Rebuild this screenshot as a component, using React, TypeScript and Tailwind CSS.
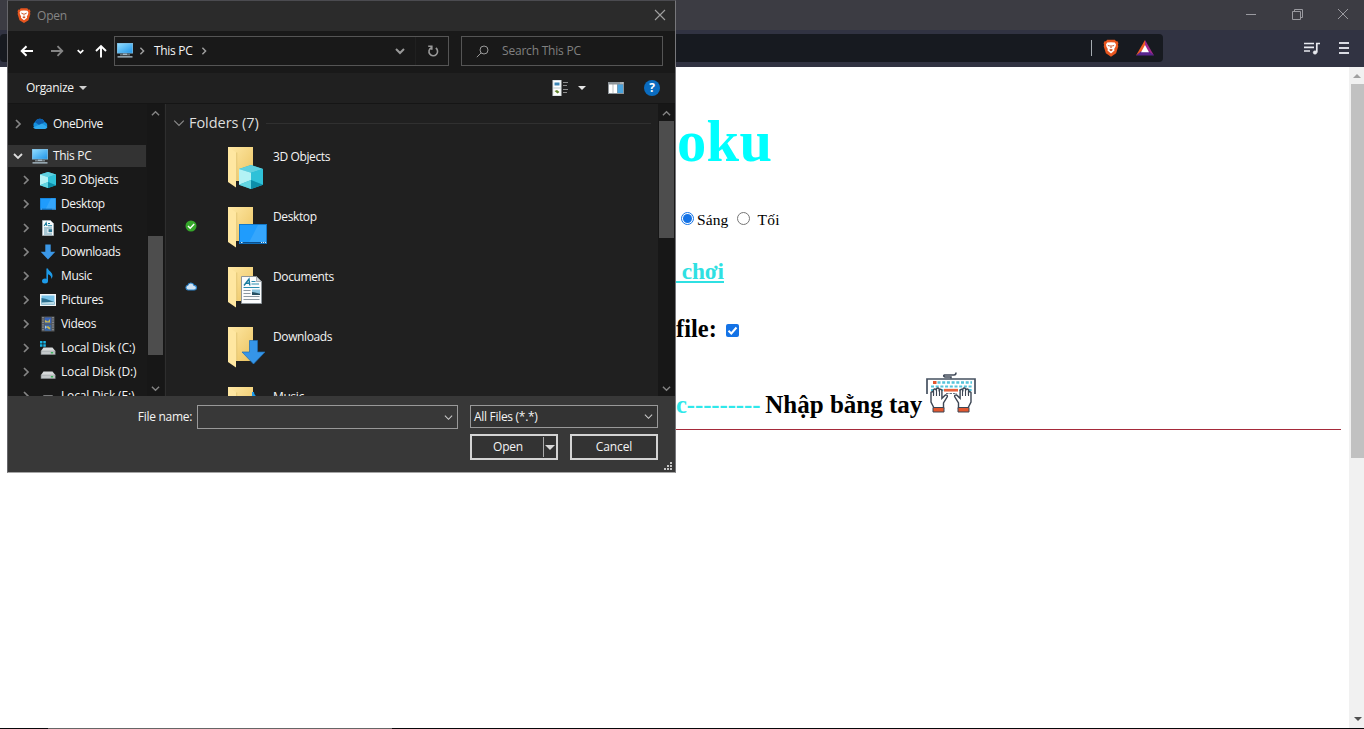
import type { ReactNode } from "react";

const UI = "font-['Open_Sans','Noto_Sans',sans-serif]";

function Brave({ className }: { className: string }) {
  return (
    <svg viewBox="0 0 16 18" className={className}>
      <path d="M4.2 0.8h7.6l1.3 1.5 1.4-.1.9 2-.5 1.6.4 1.4-2.2 7.1L8 17.7l-5.1-3.4L.7 7.2l.4-1.4L.6 4.2l.9-2 1.4.1z" fill="#e8561f" />
      <path d="M4.2 3.6l3.8-.4 3.800.4 1.200 2-.5 2.200-1.300 2.300.3 1.500L8 14.400l-3.500-2.800.3-1.500-1.300-2.300-.5-2.200z" fill="#fff" />
      <path d="M4.300 5.700l2.600.7-.7 1.400zM11.700 5.700l-2.600.7.700 1.400zM6 10.800l2-.9 2 .9-2 1.500zM7.600 6h.8l.3 2.500-.7.800-.7-.8z" fill="#c84a1c" />
    </svg>
  );
}

function Chevron({ dir, className, w = 1.5 }: { dir: "r" | "d" | "u"; className: string; w?: number }) {
  const d = dir === "r" ? "M3 1l4 4-4 4" : dir === "d" ? "M1 3l4 4 4-4" : "M1 7l4-4 4 4";
  return (
    <svg viewBox="0 0 10 10" className={className} fill="none" stroke="currentColor" strokeWidth={w}>
      <path d={d} />
    </svg>
  );
}

function Monitor() {
  return (
    <svg viewBox="0 0 16 16" className="h-4 w-4 shrink-0">
      <defs>
        <linearGradient id="mon" x1="0" y1="0" x2="1" y2="1">
          <stop offset="0" stopColor="#8fdcff" />
          <stop offset="1" stopColor="#2196e8" />
        </linearGradient>
      </defs>
      <rect x="0" y="1" width="16" height="10.5" fill="#7fb9dc" />
      <rect x="0.7" y="1.7" width="14.6" height="9.1" fill="url(#mon)" />
      <path d="M6 11.5h4v1.5H6z" fill="#8ea4b2" />
      <path d="M3 12.4h10v.9H3zM0.5 14.3h15v1.3h-15z" fill="#b7cbd8" />
    </svg>
  );
}

function Cube() {
  return (
    <g>
      <path d="M8 0l8 2.600v10.600L8 16 0 13.200V2.600z" fill="#26b6d1" />
      <path d="M8 0l8 2.600L8 5.200 0 2.600z" fill="#5fd0df" />
      <path d="M0 2.600l8 2.600V10l-8 3.200z" fill="#b3f2f5" />
      <path d="M8 5.200l8-2.600v10.600L8 10z" fill="#2fc1d8" />
      <path d="M0 13.200L8 10v6z" fill="#62d6e2" />
      <path d="M8 10l8 3.200L8 16z" fill="#0c8ea9" />
    </g>
  );
}

function Screen() {
  return (
    <g>
      <rect x="0" y="0" width="28" height="20" fill="#1378c8" />
      <rect x="1" y="1" width="26" height="17.500" fill="#1f9cfd" />
      <path d="M10 18.500L19 1h8v17.500z" fill="#35a6fc" />
      <path d="M1 18.600h26" stroke="#0b4f8c" strokeWidth="1.200" />
      <path d="M2 18.500h1.500M22 18.500h1.200M24 18.500h1.200M26 18.500h1" stroke="#d7efff" strokeWidth="1" />
    </g>
  );
}

function Paper() {
  return (
    <g>
      <path d="M.5.5h15l5 5v22H.5z" fill="#fbfcfd" stroke="#8c9499" />
      <path d="M15.500.5v5h5z" fill="#d3d9dd" stroke="#8c9499" strokeWidth=".7" />
      <path d="M3 9.500L8 3l.8 6.500M4.800 7.300h4" stroke="#1b7d9f" strokeWidth="1.400" fill="none" />
      <path d="M10.500 5.500h4M10.500 8h7.500M2.500 11.500h16" stroke="#2b8db0" strokeWidth="1.200" />
      <path d="M2.500 14.500h7M2.500 17.500h7M2.500 20.500h16M2.500 23.500h16" stroke="#8b97a0" />
      <rect x="11" y="13.500" width="8" height="5.500" fill="#8dc4de" />
      <path d="M11 16l3 .5 5 1.200v1.300h-8z" fill="#264f62" />
    </g>
  );
}

function Arrow() {
  return <path d="M7.500.5h8v11.500h7.500L11.500 24 0 12h7.500z" fill="#3595e8" stroke="#1c6db4" strokeWidth=".7" />;
}

function Drive() {
  return (
    <g>
      <path d="M3.500 7.500h9l3 3.700H.8z" fill="#d7dadb" />
      <rect x=".8" y="10.800" width="14.700" height="4" fill="#919698" />
      <rect x="1.500" y="11.300" width="13.300" height="2.800" fill="#c4c8ca" />
      <rect x="10.800" y="12.200" width="2.400" height="1.200" fill="#1fae45" />
    </g>
  );
}

const sideIcons: Record<string, ReactNode> = {
  cube: <Cube />,
  screen: (
    <g transform="translate(0 2) scale(.571 .6)">
      <Screen />
    </g>
  ),
  doc: (
    <g>
      <path d="M2.500.5h8l3 3v12h-11z" fill="#f7fafb" stroke="#a9b4ba" strokeWidth=".8" />
      <path d="M4.200 6l2-3.300.7 3.300M8 3.500h2M8 5.700h4" stroke="#167b9d" strokeWidth="1.100" fill="none" />
      <path d="M4 8h8M4 10h3.500M4 12h3.500M4 14h8" stroke="#4a8ca5" strokeWidth=".9" />
      <rect x="8.500" y="9.200" width="3.600" height="3" fill="#2b7693" />
    </g>
  ),
  down: <path d="M5.300.5h5.400v7.300h4.600L8 15.500.7 7.800h4.600z" fill="#3b97e6" />,
  music: (
    <g fill="#1d9be9">
      <ellipse cx="5" cy="13" rx="3" ry="2.500" />
      <path d="M6.400.5H8c.3 2.500 5 3.900 4.500 7.800-.1 1.200-.7 2-1.300 2.600.4-2.700-.8-3.900-3.200-4.700V13H6.400z" />
    </g>
  ),
  pic: (
    <g>
      <rect x="0" y="2" width="16" height="12" fill="#f2f5f6" />
      <rect x="1.500" y="3.500" width="13" height="9" fill="#79c3e9" />
      <path d="M1.500 6l4 .7 9 3.300v2.500h-13z" fill="#2b6f8f" />
      <path d="M1.500 10.500l13-.8v2.800h-13z" fill="#b6d9e5" />
    </g>
  ),
  video: (
    <g>
      <rect x="1.500" y=".5" width="13" height="15" fill="#55585b" />
      <path d="M3 1v14M13 1v14" stroke="#a5a8aa" strokeWidth="1.100" strokeDasharray="1.200 1.200" />
      <rect x="4.700" y="1.500" width="6.600" height="6" fill="#3b64b5" />
      <rect x="4.700" y="8.700" width="6.600" height="6" fill="#3968a8" />
      <path d="M5 4l3 1.500L10 3v3.500H5zM6 11l2-1 2.500 2-1 1.500z" fill="#c9b54c" />
      <path d="M5 9.500l2 1.500-2 2z" fill="#a8c5e8" />
    </g>
  ),
  cdrive: (
    <g>
      <Drive />
      <path d="M0 1h2.500v2.500H0zM3.300 1h2.500v2.500H3.300zM0 4.200h2.500v2.500H0zM3.300 4.200h2.500v2.500H3.300z" fill="#19b5e6" />
    </g>
  ),
  drive: <Drive />,
};

const tree: [string, string][] = [
  ["cube", "3D Objects"],
  ["screen", "Desktop"],
  ["doc", "Documents"],
  ["down", "Downloads"],
  ["music", "Music"],
  ["pic", "Pictures"],
  ["video", "Videos"],
  ["cdrive", "Local Disk (C:)"],
  ["drive", "Local Disk (D:)"],
  ["drive", "Local Disk (E:)"],
];

const folders: [string, ReactNode, string][] = [
  ["3D Objects", <g transform="translate(11 18) scale(1.500)"><Cube /></g>, ""],
  ["Desktop", <g transform="translate(11 17)"><Screen /></g>, "ok"],
  ["Documents", <g transform="translate(13 9)"><Paper /></g>, "cloud"],
  ["Downloads", <g transform="translate(14 13)"><Arrow /></g>, ""],
  ["Music", <path d="M24 5h2c0 4 5 5 5 12l-7-2z" fill="#1d9be9" />, ""],
];

function Folder({ children }: { children: ReactNode }) {
  return (
    <svg viewBox="0 0 42 44" className="h-11 w-[42px] shrink-0">
      <defs>
        <linearGradient id="fold" x1="0" y1="0" x2="1" y2="1">
          <stop offset="0" stopColor="#ffe9a6" />
          <stop offset=".6" stopColor="#f3d27c" />
          <stop offset="1" stopColor="#e9c15c" />
        </linearGradient>
      </defs>
      <path d="M0 0h25v34H8L0 30z" fill="url(#fold)" />
      <path d="M0 0l9 6v28H8v6.500L0 35z" fill="#ffe7a1" />
      <path d="M8.700 5.500V34" stroke="#d9b964" strokeWidth=".7" />
      {children}
    </svg>
  );
}

function DarkScroll({ thumb }: { thumb: string }) {
  return (
    <div className="flex h-full w-[17px] shrink-0 flex-col items-center bg-[#171717] pt-[5px] pb-[3px]">
      <Chevron dir="u" className="h-[9px] w-[9px] text-[#858585]" />
      <div className="min-h-0 w-full flex-1">
        <div className={"ml-px w-[15px] bg-[#4d4d4d] " + thumb} />
      </div>
      <Chevron dir="d" className="h-[9px] w-[9px] text-[#858585]" />
    </div>
  );
}

function Dialog() {
  return (
    <div className={"absolute top-0 left-[7px] flex h-[473px] w-[669px] flex-col border border-t-[#4b4b50] border-r-[#77777b] border-b-[#a5a5a5] border-l-[#66666a] bg-[#191919] text-[12px] tracking-[-0.3px] text-[#f4f4f4] " + UI}>
      <div className="flex h-[30px] shrink-0 items-center bg-[#2b2b2b] pr-[9px] pl-[9px] text-[#858585]">
        <Brave className="mb-[2px] h-[17px] w-[14px]" />
        <span className="ml-[6px] flex-1 tracking-[-0.2px]">Open</span>
        <svg viewBox="0 0 12 12" className="mb-[2px] h-3 w-3" stroke="#a0a0a0" strokeWidth="1.100"><path d="M1 1l10 10M11 1L1 11" /></svg>
      </div>

      <div className="flex h-[42px] shrink-0 items-center pr-[11px] pb-[2px] pl-3">
        <svg viewBox="0 0 14 12" className="h-3 w-[14px]" fill="none" stroke="#fff" strokeWidth="2"><path d="M13 6H2M6.500 1.200L1.700 6l4.800 4.800" /></svg>
        <svg viewBox="0 0 14 12" className="ml-4 h-3 w-[14px]" fill="none" stroke="#858585" strokeWidth="1.800"><path d="M1 6h11M7.500 1.200L12.300 6l-4.800 4.800" /></svg>
        <Chevron dir="d" w={2.400} className="ml-[13px] h-[7px] w-[7px] text-white" />
        <svg viewBox="0 0 12 14" className="ml-[11px] h-[14px] w-3" fill="none" stroke="#fff" strokeWidth="1.900"><path d="M6 13.500V2M1 7l5-5 5 5" /></svg>
        <div className="ml-[7px] flex h-[30px] w-[335px] items-center border border-[#555] pl-[2px]">
          <div className="mb-[2px] flex"><Monitor /></div>
          <Chevron dir="r" w={1.800} className="ml-[5px] h-2 w-2 text-[#a0a0a0]" />
          <span className="ml-[8px]">This PC</span>
          <Chevron dir="r" w={1.800} className="ml-[7px] h-2 w-2 text-[#a0a0a0]" />
          <div className="flex-1" />
          <Chevron dir="d" w={2} className="mr-[10px] h-[10px] w-[10px] text-[#999]" />
          <div className="flex h-full w-[33px] items-center justify-center border-l border-[#202020]">
            <svg viewBox="0 0 12 12" className="ml-px h-3 w-3" fill="none" stroke="#999" strokeWidth="1.600"><path d="M8.800 3A4.300 4.300 0 1 1 4.200 2.700M1.200 1.200h3.600v3.600" /></svg>
          </div>
        </div>
        <div className="ml-[12px] flex h-[30px] w-[202px] items-center border border-[#555] pl-[14px] text-[#808080]">
          <svg viewBox="0 0 13 13" className="h-[13px] w-[13px]" fill="none" stroke="#999"><circle cx="8" cy="5" r="4" /><path d="M5.200 7.800L.8 12.200" /></svg>
          <span className="ml-[13px] tracking-[-0.2px]">Search This PC</span>
        </div>
      </div>

      <div className="flex h-[30px] shrink-0 items-center bg-[#202020] pr-[15px] pl-[18px]">
        <span>Organize</span>
        <svg viewBox="0 0 8 4" className="ml-[5px] h-1 w-2"><path d="M0 0h8L4 4z" fill="#d0d0d0" /></svg>
        <div className="flex-1" />
        <svg viewBox="0 0 16 16" className="h-4 w-4">
          <path d="M.5 0h9v16h-9z" fill="#dce3e5" /><path d="M1.500 1h7v6h-7zM1.500 9h7v6h-7z" fill="#fff" />
          <path d="M2.500 2.500h5v3h-5z" fill="#3c86b6" /><path d="M2.500 11l2.500-1 2.500 2-2 1.500z" fill="#62842e" />
          <path d="M11 2.500h5M11 5.500h4M11 9.500h5M11 12.500h4" stroke="#8c8c8c" />
        </svg>
        <svg viewBox="0 0 8 4" className="ml-[10px] h-1 w-2"><path d="M0 0h8L4 4z" fill="#e6e6e6" /></svg>
        <svg viewBox="0 0 16 12" className="ml-[22px] h-3 w-4">
          <path d="M0 0h16v12H0z" fill="#8d9499" /><path d="M1 2.500h3.700V11H1zM5.300 2.500H9V11H5.300z" fill="#fff" /><path d="M9.600 2.500H15V11H9.600z" fill="#4aa3dc" /><path d="M12.500 1h1M14.300 1h1" stroke="#fff" />
        </svg>
        <div className="ml-5 flex h-4 w-4 items-center justify-center rounded-full bg-[#0a6cc0] text-[12px] leading-4 font-bold text-white">?</div>
      </div>

      <div className="flex h-[293px] shrink-0 overflow-hidden border-t border-[#151515]">
        <div className="w-[139px] shrink-0 pt-2">
          <div className="flex h-6 items-center pl-[5px]">
            <Chevron dir="r" w={1.700} className="h-[10px] w-[10px] text-[#858585]" />
            <svg viewBox="0 0 16 16" className="ml-[9px] h-4 w-4">
              <path d="M4 13a4 4 0 0 1-.7-7.200A5 5 0 0 1 12.500 6 3.600 3.600 0 0 1 12.500 13z" fill="#1490df" />
              <path d="M3 6.200A5 5 0 0 1 12.500 6L8 9.500z" fill="#0b5cab" />
              <path d="M1 11.500L10 7.500l5.500 3.600A3.300 3.300 0 0 1 12.500 13H4a4 4 0 0 1-3-1.500z" fill="#2fa9ee" />
            </svg>
            <span className="ml-[5px] tracking-[-0.36px]">OneDrive</span>
          </div>
          <div className="mt-[9px] mb-px flex h-[22px] w-[138px] items-center bg-[#333] pl-[5px]">
            <Chevron dir="d" className="h-[10px] w-[10px] text-[#ddd]" w={1.800} />
            <div className="ml-[9px] flex"><Monitor /></div>
            <span className="ml-[5px]">This PC</span>
          </div>
          {tree.map(([icon, label]) => (
            <div key={label} className="flex h-6 items-center pl-[13px] whitespace-nowrap">
              <Chevron dir="r" w={1.700} className="h-[10px] w-[10px] shrink-0 text-[#858585]" />
              <svg viewBox="0 0 16 16" className="ml-[9px] h-4 w-4 shrink-0">{sideIcons[icon]}</svg>
              <span className={label.startsWith("Local") ? "ml-[5px] tracking-[-0.17px]" : "ml-[5px] tracking-[-0.36px]"}>{label}</span>
            </div>
          ))}
        </div>
        <DarkScroll thumb="mt-[118px] h-[119px]" />
        <div className="w-[2px] shrink-0 border-r border-[#2e2e2e]" />
        <div className="min-w-0 flex-1 bg-[#202020] pt-[8px]">
          <div className="flex h-[22px] items-center pr-[7px] pl-[7px]">
            <Chevron dir="d" w={1} className="h-3 w-3 text-[#8a8a8a]" />
            <span className="ml-[4px] text-[14.500px] tracking-[-0.05px] text-[#dedede]">Folders (7)</span>
            <div className="ml-[7px] h-px flex-1 bg-[#303030]" />
          </div>
          <div className="pt-[13px]">
            {folders.map(([label, art, status]) => (
              <div key={label} className="flex h-[60px] items-start">
                <div className="flex h-[44px] w-[62px] items-center pl-[19px]">
                  {status === "ok" && (
                    <svg viewBox="0 0 12 12" className="mb-[7px] h-3 w-3"><circle cx="6" cy="6" r="5.500" fill="#35a62a" /><path d="M3 6l2.200 2.200L9.200 4" stroke="#fff" strokeWidth="1.400" fill="none" /></svg>
                  )}
                  {status === "cloud" && (
                    <svg viewBox="0 0 12 10" className="mb-[7px] h-[10px] w-3"><path d="M3 9a2.400 2.400 0 0 1-.3-4.700A3.300 3.300 0 0 1 9 4.400 2.300 2.300 0 0 1 9.200 9z" fill="#cfe2f2" stroke="#2a83cb" strokeWidth="1.100" /></svg>
                  )}
                </div>
                <Folder>{art}</Folder>
                <span className="ml-[3px] leading-5 tracking-[-0.38px]">{label}</span>
              </div>
            ))}
          </div>
        </div>
        <DarkScroll thumb="mt-[3px] h-[117px]" />
      </div>

      <div className="flex min-h-0 flex-1 bg-[#383838] pt-[9px]">
        <div className="flex w-[189px] justify-end pr-[5px] leading-[24px]">File name:</div>
        <div className="flex h-6 w-[261px] items-center justify-end border border-[#999] pr-1">
          <Chevron dir="d" w={1.200} className="h-[9px] w-[9px] text-[#ccc]" />
        </div>
        <div className="ml-3 w-[188px]">
          <div className="flex h-[23px] items-center justify-between border border-[#999] bg-[#333] pr-1 pl-[3px]">
            <span>All Files (*.*)</span>
            <Chevron dir="d" w={1.200} className="h-[9px] w-[9px] text-[#ccc]" />
          </div>
          <div className="mt-[6px] flex gap-3">
            <div className="flex h-[26px] w-[88px] items-center border-2 border-[#d4d4d4] bg-[#333]">
              <span className="w-[71px] shrink-0 pl-px text-center tracking-[-0.2px]">Open</span>
              <div className="h-5 w-px bg-[#aaa]" />
              <svg viewBox="0 0 10 5" className="ml-px h-[5px] w-[10px]"><path d="M0 0h10L5 5z" fill="#d8d8d8" /></svg>
            </div>
            <div className="flex h-[26px] w-[88px] items-center justify-center border-2 border-[#d4d4d4] bg-[#333] tracking-[-0.1px]">Cancel</div>
          </div>
        </div>
        <svg viewBox="0 0 9 9" className="mt-auto mb-px ml-[6px] h-[9px] w-[9px]" fill="#c4c4c4"><path d="M6 0h2v2H6zM3 3h2v2H3zM6 3h2v2H6zM0 6h2v2H0zM3 6h2v2H3zM6 6h2v2H6z" /></svg>
      </div>
    </div>
  );
}

function Hand({ x, flip }: { x: number; flip?: boolean }) {
  return (
    <g transform={flip ? `translate(${x} 16) scale(-1 1)` : `translate(${x} 16)`}>
      <path d="M3.500 20l-3-6V4.500q1.300-1.800 2.400 0V2q1.500-2 2.900 0V1q1.500-2 2.900 0v1q1.600-1.600 2.700.3v8l3.500-3.300q2.200-.2 2 1.600L13 15v5z" fill="#fff" stroke="#3d4654" strokeWidth="1.400" />
      <path d="M3 3v5M6 2v6M9 2v6" stroke="#3d4654" strokeWidth="1.100" />
      <path d="M2.500 19.500h11V24h-11z" fill="#e2572f" stroke="#3d4654" strokeWidth="1" />
    </g>
  );
}

function Keyboard() {
  return (
    <svg viewBox="0 0 50 41" className="h-[41px] w-[50px]">
      <path d="M25 6.500V5h-6q-2.500-1-.5-2H28q2 0 2-2.500" fill="none" stroke="#414b59" strokeWidth="1.500" />
      <path d="M1 22V7h48v15" fill="#fff" stroke="#465160" strokeWidth="1.700" />
      <path d="M11.500 10.500H46" stroke="#55c4da" strokeWidth="2.400" strokeDasharray="3 1.700" />
      <path d="M5 14.500h41M5 18h41" stroke="#55c4da" strokeWidth="2.100" strokeDasharray="3 1.700" />
      <path d="M7 10.500h3.500" stroke="#e2572f" strokeWidth="3" />
      <path d="M18 18.200h14" stroke="#e9623b" strokeWidth="2.700" />
      <path d="M20 21.500h11" stroke="#667180" strokeWidth="1.200" strokeDasharray="2.500 1" />
      <Hand x={4.500} />
      <Hand x={45.500} flip />
    </svg>
  );
}

export default function App() {
  return (
    <div className="relative flex h-[729px] w-[1364px] flex-col overflow-hidden bg-white">
      <div className="flex h-[30px] shrink-0 items-center justify-end bg-[#3c3c43] pr-[15px] pb-[2px]">
        <svg viewBox="0 0 10 10" className="h-[10px] w-[10px]" stroke="#9a9aa0"><path d="M0 5.500h10" /></svg>
        <svg viewBox="0 0 11 11" className="ml-[36px] h-[11px] w-[11px]" fill="none" stroke="#9a9aa0"><path d="M.5 2.500h8v8h-8zM2.500 2.500v-2h8v8h-2" /></svg>
        <svg viewBox="0 0 12 12" className="ml-[34px] h-3 w-3" stroke="#9a9aa0"><path d="M1 1l10 10M11 1L1 11" /></svg>
      </div>
      <div className="flex h-[37px] shrink-0 items-center bg-[#313342] pr-[15px] pb-px">
        <div className="flex h-7 w-[1163px] items-center justify-end rounded bg-[#171a20] pr-[9px]">
          <div className="h-4 w-px bg-[#a5abb0]" />
          <Brave className="ml-[11px] h-[18px] w-4" />
          <svg viewBox="0 0 18 16" className="ml-[17px] h-4 w-[18px]">
            <path d="M9 0L0 15.500l9-5z" fill="#f05a24" /><path d="M9 0l9 15.500L9 10z" fill="#a3288c" /><path d="M0 15.500h18L12.500 11h-7z" fill="#58258f" /><path d="M9 5l4 7.300H5z" fill="#fff" />
          </svg>
        </div>
        <div className="flex-1" />
        <svg viewBox="0 0 16 13" className="h-[13px] w-4" fill="none" stroke="#e8eaf0" strokeWidth="1.700"><path d="M0 1.500h10M0 5.300h10M0 9h6M12.800 10.500V1.500H16" /><circle cx="11" cy="10.500" r="1.800" fill="#e8eaf0" strokeWidth=".5" /></svg>
        <svg viewBox="0 0 10 12" className="ml-[19px] h-3 w-[10px]" stroke="#d9dbe3" strokeWidth="2"><path d="M0 1h10M0 6h10M0 11h10" /></svg>
      </div>

      <div className="flex min-h-0 flex-1">
        <div className="flex-1 pl-[676px] font-['Liberation_Serif',serif] text-black">
          <div className="mt-[42px] h-[66px] pl-px text-[58.500px] leading-[66px] font-bold tracking-[0.3px] text-[#00ffff]">oku</div>
          <div className="mt-[34px] flex h-5 items-center pl-[5px] text-[15.500px] leading-5">
            <div className="mb-[2px] flex h-[13px] w-[13px] items-center justify-center rounded-full border border-[#1473e6]"><div className="h-[9px] w-[9px] rounded-full bg-[#1473e6]" /></div>
            <span className="ml-[3px] pt-px tracking-[0.1px]">Sáng</span>
            <div className="mb-[2px] ml-[9px] h-[13px] w-[13px] rounded-full border border-[#767676]" />
            <span className="ml-[7px] pt-px tracking-[0.3px]">Tối</span>
          </div>
          <div className="mt-[27px] h-[30px] text-[23.300px] leading-[30px] font-bold tracking-[-0.1px] whitespace-pre text-[#2fe0e2] underline"> chơi</div>
          <div className="mt-[28px] flex h-[30px] items-center text-[24.500px] leading-[30px] font-bold">
            <span className="w-10 whitespace-nowrap">file:</span>
            <div className="mt-[3px] ml-[10px] flex h-[13px] w-[13px] items-center justify-center rounded-[2px] bg-[#1473e6]"><svg viewBox="0 0 13 13" className="h-[13px] w-[13px]" fill="none" stroke="#fff" strokeWidth="2"><path d="M2.500 6.800l2.800 2.700L10.500 3.500" /></svg></div>
          </div>
          <div className="mt-[28px] flex h-[57px] text-[25px] leading-[65px] font-bold whitespace-nowrap">
            <span className="text-[24.500px] text-[#2fe8ea]">c---------</span>
            <span className="ml-[5px]">Nhập bằng tay</span>
            <div className="ml-1"><Keyboard /></div>
          </div>
          <div className="mr-[8px] h-px bg-[#a52a3a]" />
        </div>
        <div className="flex w-[15px] flex-col items-center bg-[#f1f1f1]">
          <svg viewBox="0 0 8 4" className="mt-[7px] h-1 w-2"><path d="M0 4h8L4 0z" fill="#a0a0a0" /></svg>
          <div className="mt-[6px] ml-[2px] h-[374px] w-[13px] bg-[#c1c1c1]" />
          <div className="flex-1" />
          <svg viewBox="0 0 8 4" className="mb-[7px] ml-[2px] h-1 w-2"><path d="M0 0h8L4 4z" fill="#505050" /></svg>
        </div>
      </div>
      <div className="flex h-px shrink-0 bg-[#08080a]"><div className="ml-12 h-px w-[344px] bg-[#666]" /></div>
      <Dialog />
    </div>
  );
}
